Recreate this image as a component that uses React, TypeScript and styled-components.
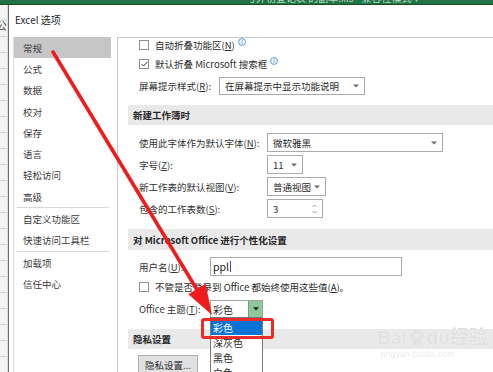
import React from "react";
import styled, { createGlobalStyle } from "styled-components";

const GlobalStyle = createGlobalStyle`
  body {
    margin: 0;
    background: #ffffff;
  }
`;

const Screen = styled.div`
  position: relative;
  width: 493px;
  height: 372px;
  overflow: hidden;
  background: #ffffff;
  font-family: "Noto Sans CJK SC", "Noto Sans", sans-serif;
  color: #2b2b2b;
  font-size: 9.5px;
`;

const TitleBar = styled.div`
  height: 5px;
  background: #217346;
  border-bottom: 1px solid #16502f;
  overflow: hidden;
  box-sizing: border-box;
`;

const TitleBarText = styled.div`
  margin-top: -8px;
  padding-left: 246px;
  font-size: 10px;
  line-height: 12px;
  color: #b9d8c4;
  white-space: nowrap;
`;

const Workspace = styled.div`
  display: flex;
  height: 367px;
`;

const SheetStrip = styled.div`
  width: 8px;
  flex-shrink: 0;
  overflow: hidden;
  background: repeating-linear-gradient(
      to bottom,
      transparent 0 15px,
      #d4d4d4 15px 16px
    ),
    #f4f4f4;
  border-right: 1px solid #dedede;
  box-sizing: border-box;
`;

const SheetGlyph = styled.div`
  margin: 14px 0 0 -4px;
  font-size: 11px;
  line-height: 12px;
  color: #444;
`;

const Dialog = styled.div`
  flex: 1;
  display: flex;
  flex-direction: column;
  border-left: 1px solid #6b6b6b;
  background: #ffffff;
`;

const DialogTitle = styled.div`
  height: 32px;
  display: flex;
  align-items: center;
  padding-left: 6px;
  font-size: 10px;
  color: #1e1e1e;
  padding-bottom: 3px;
  box-sizing: border-box;
`;

const DialogBody = styled.div`
  flex: 1;
  display: flex;
  min-height: 0;
`;

const Nav = styled.div`
  width: 97px;
  margin-left: 4px;
  border-left: 1px solid #dcdcdc;
  flex-shrink: 0;
`;

const NavItem = styled.div<{ $active?: boolean }>`
  height: 21.3px;
  display: flex;
  align-items: center;
  padding-left: 9px;
  background: ${({ $active }) => ($active ? "#c6c6c6" : "transparent")};
  color: #3a3a3a;
`;

const NavDivider = styled.div`
  height: 1px;
  margin: 0 2px 0 3px;
  background: #d9d9d9;
`;

const Content = styled.div`
  flex: 1;
  margin-left: 6px;
  border-left: 1px solid #c8c8c8;
  border-top: 1px solid #c8c8c8;
  padding-left: 10px;
  overflow: hidden;
  min-width: 0;
`;

const Row = styled.div<{ $mt?: number; $h: number }>`
  display: flex;
  align-items: center;
  height: ${({ $h }) => $h}px;
  margin-top: ${({ $mt }) => $mt ?? 0}px;
  padding-left: 11px;
  white-space: nowrap;
  position: relative;
`;

const SectionHeader = styled.div<{ $mt: number; $h: number }>`
  height: ${({ $h }) => $h}px;
  margin-top: ${({ $mt }) => $mt}px;
  display: flex;
  align-items: center;
  padding-left: 5px;
  background: #e9e9e9;
  font-weight: 700;
  color: #262626;
  white-space: nowrap;
`;

const Label = styled.span<{ $w?: number }>`
  width: ${({ $w }) => ($w ? `${$w}px` : "auto")};
  flex-shrink: 0;
  color: #333;
`;

const Box = styled.span`
  width: 10px;
  height: 10px;
  border: 1px solid #8f8f8f;
  box-sizing: border-box;
  background: #fff;
  margin-right: 6px;
  display: inline-flex;
  align-items: center;
  justify-content: center;
  flex-shrink: 0;
`;

const InfoIcon = styled.svg`
  width: 8px;
  height: 8px;
  margin-left: 3px;
  margin-top: -6px;
`;

const Select = styled.div<{ $w: number }>`
  width: ${({ $w }) => $w}px;
  height: 100%;
  box-sizing: border-box;
  border: 1px solid #ababab;
  background: #fff;
  display: flex;
  align-items: center;
  justify-content: space-between;
  padding: 0 5px 0 5px;
  color: #2b2b2b;
`;

const Caret = styled.svg`
  width: 6px;
  height: 4px;
  flex-shrink: 0;
`;

const Spin = styled.svg`
  width: 5px;
  height: 12px;
  flex-shrink: 0;
`;

const TextInput = styled.div`
  width: 192px;
  height: 100%;
  box-sizing: border-box;
  border: 1px solid #ababab;
  display: flex;
  align-items: center;
  padding-left: 2px;
  font-size: 10.5px;
  color: #222;
`;

const CaretLine = styled.span`
  width: 1px;
  height: 11px;
  background: #6a3a9a;
  margin-left: 1px;
`;

const Combo = styled.div`
  position: relative;
  width: 53px;
  height: 100%;
  box-sizing: border-box;
  border: 1px solid #9aa89e;
  display: flex;
  background: #fff;
`;

const ComboText = styled.div`
  flex: 1;
  display: flex;
  align-items: center;
  padding-left: 2px;
  font-size: 10px;
`;

const ComboButton = styled.div`
  width: 13px;
  background: #8ec79c;
  border-left: 1px solid #6fa27c;
  display: flex;
  align-items: center;
  justify-content: center;
`;

const DropList = styled.div`
  position: absolute;
  left: -1px;
  top: 100%;
  width: 53px;
  background: #fff;
  border: 1px solid #7a7a7a;
  box-sizing: border-box;
  z-index: 2;
  padding-top: 1px;
`;

const DropItem = styled.div<{ $selected?: boolean }>`
  height: ${({ $selected }) => ($selected ? 16 : 15)}px;
  display: flex;
  align-items: center;
  padding-left: 2px;
  font-size: 10px;
  background: ${({ $selected }) => ($selected ? "#0a74d6" : "transparent")};
  color: ${({ $selected }) => ($selected ? "#ffffff" : "#2b2b2b")};
`;

const Button = styled.div`
  width: 60px;
  height: 100%;
  box-sizing: border-box;
  border: 1px solid #adadad;
  background: #e1e1e1;
  display: flex;
  align-items: center;
  justify-content: center;
  margin-left: -1px;
`;

const HighlightBox = styled.div`
  position: absolute;
  left: 201px;
  top: 318px;
  width: 73px;
  height: 21px;
  border: 3px solid #ec2b2b;
  border-radius: 3px;
  box-sizing: border-box;
  z-index: 3;
`;

const ArrowLayer = styled.svg`
  position: absolute;
  left: 0;
  top: 0;
  width: 493px;
  height: 372px;
  pointer-events: none;
  z-index: 4;
`;

const Watermark = styled.div`
  position: absolute;
  left: 377px;
  top: 327px;
  color: #e2e2e2;
  text-shadow: 0 0 1px #ffffff;
  pointer-events: none;
  z-index: 1;
`;

const WatermarkMain = styled.div`
  display: flex;
  align-items: center;
  font-family: "Liberation Sans", "Noto Sans CJK SC", sans-serif;
  font-size: 19px;
  font-weight: 700;
  line-height: 22px;
`;

const WatermarkSub = styled.div`
  font-family: "Liberation Sans", sans-serif;
  font-size: 8.5px;
  padding-left: 4px;
  letter-spacing: 0.3px;
  color: #ececec;
`;

const info = (
  <InfoIcon viewBox="0 0 8 8">
    <circle cx="4" cy="4" r="3.4" fill="none" stroke="#2f7fd0" strokeWidth="0.8" />
    <rect x="3.6" y="3.4" width="0.8" height="2.6" fill="#2f7fd0" />
    <rect x="3.6" y="2" width="0.8" height="0.8" fill="#2f7fd0" />
  </InfoIcon>
);

const caret = (
  <Caret viewBox="0 0 6 4">
    <path d="M0 0.5 L6 0.5 L3 3.5 Z" fill="#6d6d6d" />
  </Caret>
);

const navItems = ["常规", "公式", "数据", "校对", "保存", "语言", "轻松访问", "高级"];

const App = () => {
  return (
    <>
      <GlobalStyle />
      <Screen>
        <TitleBar>
          <TitleBarText>号外初登记表 的副本.xls - 兼容性模式 ▾</TitleBarText>
        </TitleBar>
        <Workspace>
          <SheetStrip>
            <SheetGlyph>公</SheetGlyph>
          </SheetStrip>
          <Dialog>
            <DialogTitle>Excel 选项</DialogTitle>
            <DialogBody>
              <Nav>
                {navItems.map((item, i) => (
                  <NavItem key={item} $active={i === 0}>
                    {item}
                  </NavItem>
                ))}
                <NavDivider />
                <NavItem>自定义功能区</NavItem>
                <NavItem>快速访问工具栏</NavItem>
                <NavDivider />
                <NavItem>加载项</NavItem>
                <NavItem>信任中心</NavItem>
              </Nav>
              <Content>
                <Row $h={13}>
                  <Box />
                  自动折叠功能区(<u>N</u>)
                  {info}
                </Row>
                <Row $h={26}>
                  <Box>
                    <svg width="7" height="6" viewBox="0 0 7 6">
                      <path d="M0.6 3 L2.6 5 L6.4 0.8" fill="none" stroke="#333" strokeWidth="1" />
                    </svg>
                  </Box>
                  默认折叠 Microsoft 搜索框
                  {info}
                </Row>
                <Row $h={18}>
                  <Label $w={80}>
                    屏幕提示样式(<u>R</u>):
                  </Label>
                  <Select $w={146}>
                    在屏幕提示中显示功能说明
                    {caret}
                  </Select>
                </Row>

                <SectionHeader $mt={10} $h={20}>
                  新建工作簿时
                </SectionHeader>
                <Row $mt={8} $h={19}>
                  <Label $w={128}>
                    使用此字体作为默认字体(<u>N</u>):
                  </Label>
                  <Select $w={176}>
                    微软雅黑
                    {caret}
                  </Select>
                </Row>
                <Row $mt={3} $h={19}>
                  <Label $w={128}>
                    字号(<u>Z</u>):
                  </Label>
                  <Select $w={36}>
                    11
                    {caret}
                  </Select>
                </Row>
                <Row $mt={3} $h={19}>
                  <Label $w={128}>
                    新工作表的默认视图(<u>V</u>):
                  </Label>
                  <Select $w={59}>
                    普通视图
                    {caret}
                  </Select>
                </Row>
                <Row $mt={3} $h={19}>
                  <Label $w={128}>
                    包含的工作表数(<u>S</u>):
                  </Label>
                  <Select $w={56}>
                    3
                    <Spin viewBox="0 0 5 12">
                      <path d="M0.5 4 L2.5 2 L4.5 4" fill="none" stroke="#8a8a8a" strokeWidth="0.8" />
                      <path d="M0.5 8 L2.5 10 L4.5 8" fill="none" stroke="#8a8a8a" strokeWidth="0.8" />
                    </Spin>
                  </Select>
                </Row>

                <SectionHeader $mt={11} $h={21}>
                  对 Microsoft Office 进行个性化设置
                </SectionHeader>
                <Row $mt={7} $h={19}>
                  <Label $w={71}>
                    用户名(<u>U</u>):
                  </Label>
                  <TextInput>
                    ppl
                    <CaretLine />
                  </TextInput>
                </Row>
                <Row $mt={2} $h={18}>
                  <Box />
                  不管是否登录到 Office 都始终使用这些值(<u>A</u>)。
                </Row>
                <Row $mt={4} $h={18}>
                  <Label $w={71}>
                    Office 主题(<u>T</u>):
                  </Label>
                  <Combo>
                    <ComboText>彩色</ComboText>
                    <ComboButton>
                      <svg width="6" height="4" viewBox="0 0 6 4">
                        <path d="M0 0.3 L6 0.3 L3 3.6 Z" fill="#111" />
                      </svg>
                    </ComboButton>
                    <DropList>
                      <DropItem $selected>彩色</DropItem>
                      <DropItem>深灰色</DropItem>
                      <DropItem>黑色</DropItem>
                      <DropItem>白色</DropItem>
                    </DropList>
                  </Combo>
                </Row>

                <SectionHeader $mt={11} $h={20}>
                  隐私设置
                </SectionHeader>
                <Row $mt={6} $h={20}>
                  <Button>隐私设置...</Button>
                </Row>
              </Content>
            </DialogBody>
          </Dialog>
        </Workspace>

        <Watermark>
          <WatermarkMain>
            Bai
            <svg width="18" height="18" viewBox="0 0 18 18" style={{ margin: "0 1px" }}>
              <ellipse cx="9" cy="12" rx="5" ry="4.5" fill="#e2e2e2" />
              <ellipse cx="4" cy="6.5" rx="2" ry="2.6" fill="#e2e2e2" />
              <ellipse cx="14" cy="6.5" rx="2" ry="2.6" fill="#e2e2e2" />
              <ellipse cx="7" cy="3" rx="1.8" ry="2.4" fill="#e2e2e2" />
              <ellipse cx="11" cy="3" rx="1.8" ry="2.4" fill="#e2e2e2" />
            </svg>
            du经验
          </WatermarkMain>
          <WatermarkSub>jingyan.baidu.com</WatermarkSub>
        </Watermark>

        <HighlightBox />

        <ArrowLayer viewBox="0 0 493 372">
          <line x1="53" y1="52" x2="199" y2="293" stroke="#f01c1c" strokeWidth="3.6" strokeLinecap="round" />
          <polygon points="212,315 188.4,294.2 205.6,283.8" fill="#f01c1c" />
        </ArrowLayer>
      </Screen>
    </>
  );
};

export default App;
